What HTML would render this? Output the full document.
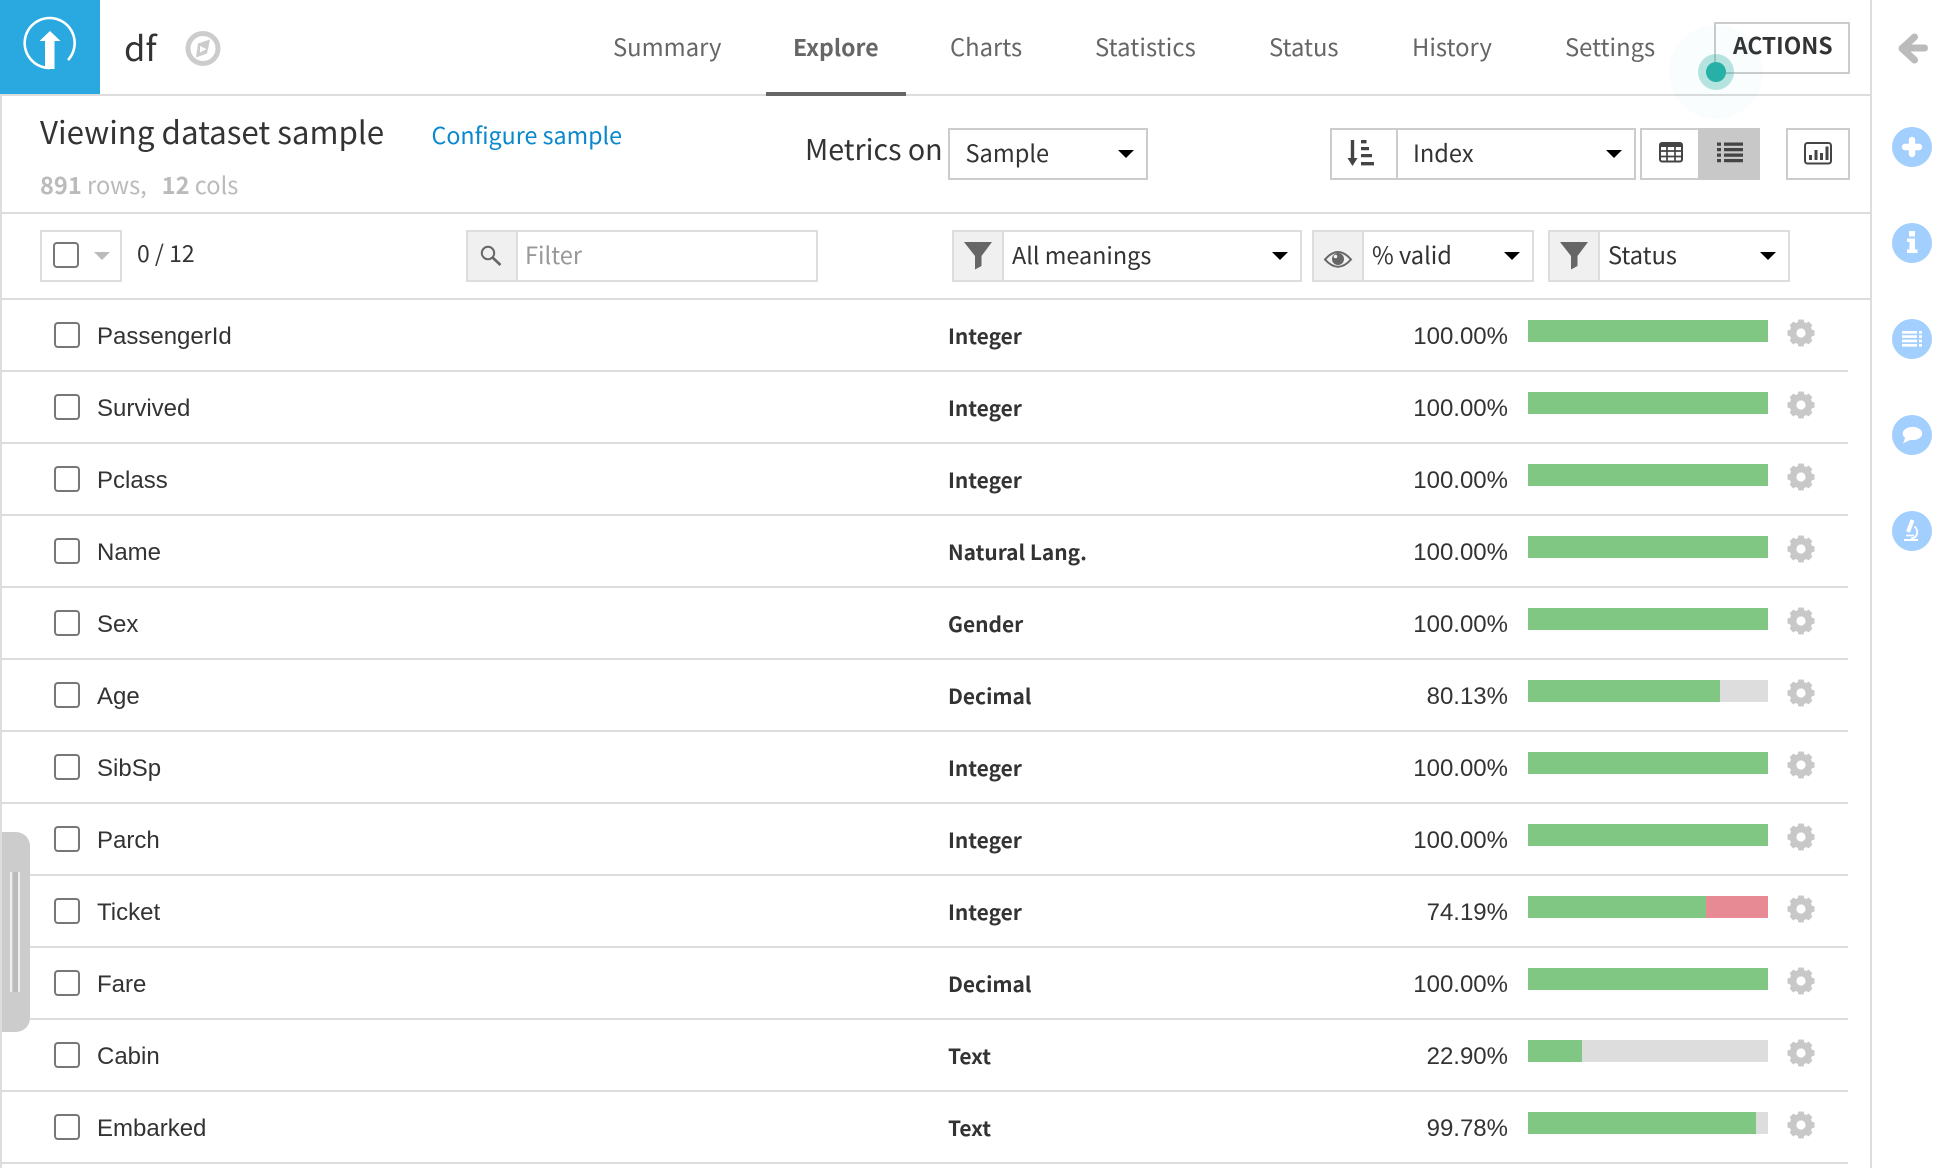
<!DOCTYPE html>
<html lang="en">
<head>
<meta charset="utf-8">
<title>df - Explore</title>
<style>
html,body{margin:0;padding:0;background:#fff}
body{position:relative;width:1944px;height:1168px;overflow:hidden;color:#333;font-family:"Noto Sans CJK JP","Liberation Sans",sans-serif;font-size:23.6px}
a{color:inherit;text-decoration:none}
.t{position:absolute;white-space:nowrap;line-height:40px}
.b{position:absolute;box-sizing:border-box;border:2px solid #ccc;background:#fff}
.l{border-color:#ddd}
.s{position:absolute;top:0;bottom:0;background:#f0f0f0;border-right:2px solid #ddd}
.c{position:absolute;width:0;height:0;border-left:8px solid transparent;border-right:8px solid transparent;border-top:8px solid #000}
.nav{top:26px;color:#666;font-size:23.8px}
.row{position:absolute;left:2px;width:1846px;height:70px;border-bottom:2px solid #ddd}
.row .cb{position:absolute;left:52px;top:22px;width:26px;height:26px;box-sizing:border-box;border:2px solid #777;border-radius:4px}
.row .n,.row .p{position:absolute;top:17px;line-height:40px;font-family:"Liberation Sans",sans-serif;font-size:24px;white-space:nowrap}
.row .n{left:95px}
.row .p{right:340px}
.row .m{position:absolute;left:946px;top:16px;line-height:40px;font-size:20.9px;font-weight:700;white-space:nowrap}
.bar{position:absolute;left:1526px;top:20px;width:240px;height:22px;background:#ddd;overflow:hidden}
.bar i{position:absolute;left:0;top:0;bottom:0;background:#81c784}
.bar u{position:absolute;right:0;top:0;bottom:0;background:#e78a93}
.row svg{position:absolute;left:1785px;top:19px;width:28px;height:28px}
svg.a{position:absolute;left:0;top:0;pointer-events:none}
</style>
</head>
<body>
<svg width="0" height="0" style="position:absolute">
<symbol id="g" viewBox="0 0 28 28">
<circle cx="14" cy="14" r="8" fill="none" stroke="#c8c8c8" stroke-width="6.800"/>
<g fill="#c8c8c8">
<rect x="11" y="0.5" width="6" height="7" rx="1.2"/>
<rect x="11" y="0.5" width="6" height="7" rx="1.2" transform="rotate(45 14 14)"/>
<rect x="11" y="0.5" width="6" height="7" rx="1.2" transform="rotate(90 14 14)"/>
<rect x="11" y="0.5" width="6" height="7" rx="1.2" transform="rotate(135 14 14)"/>
<rect x="11" y="0.5" width="6" height="7" rx="1.2" transform="rotate(180 14 14)"/>
<rect x="11" y="0.5" width="6" height="7" rx="1.2" transform="rotate(225 14 14)"/>
<rect x="11" y="0.5" width="6" height="7" rx="1.2" transform="rotate(270 14 14)"/>
<rect x="11" y="0.5" width="6" height="7" rx="1.2" transform="rotate(315 14 14)"/>
</g>
</symbol>
</svg>

<!-- frame lines -->
<div style="position:absolute;left:0;top:94px;width:1872px;height:2px;background:#ddd"></div>
<div style="position:absolute;left:0;top:96px;width:2px;height:1072px;background:#ddd"></div>
<div style="position:absolute;left:1870px;top:0;width:2px;height:1168px;background:#ddd"></div>
<div style="position:absolute;left:2px;top:212px;width:1868px;height:2px;background:#ddd"></div>
<div style="position:absolute;left:2px;top:298px;width:1868px;height:2px;background:#ddd"></div>

<!-- logo -->
<div style="position:absolute;left:0;top:0;width:100px;height:94px;background:#29a9df"></div>
<div class="t" style="left:124px;top:26px;font-size:34.5px">df</div>

<!-- nav -->
<a class="t nav" style="left:613px">Summary</a>
<a class="t nav" style="left:793px;font-weight:700;font-size:23px">Explore</a>
<a class="t nav" style="left:950px">Charts</a>
<a class="t nav" style="left:1095px;letter-spacing:.1px">Statistics</a>
<a class="t nav" style="left:1269px">Status</a>
<a class="t nav" style="left:1412px">History</a>
<a class="t nav" style="left:1565px">Settings</a>
<div style="position:absolute;left:766px;top:92px;width:140px;height:4px;background:#666"></div>
<div class="b" style="left:1714px;top:22px;width:136px;height:52px"></div>
<div class="t" style="left:1733px;top:25px;font-size:22.8px;font-weight:700">ACTIONS</div>

<!-- title row -->
<div class="t" style="left:40px;top:112px;font-size:31.3px">Viewing dataset sample</div>
<a class="t" style="left:431.500px;top:114px;color:#0a88cc;font-size:23.25px">Configure sample</a>
<div class="t" style="left:40px;top:164px;color:#bbb"><b>891</b> rows,<span style="display:inline-block;width:15px"></span><b>12</b> cols</div>
<div class="t" style="left:805px;top:129px;font-size:28.6px">Metrics on</div>

<div class="b" style="left:948px;top:128px;width:200px;height:52px"></div>
<div class="t" style="left:965.500px;top:132px">Sample</div>
<div class="c" style="left:1118px;top:150px"></div>

<div class="b" style="left:1330px;top:128px;width:306px;height:52px"><div style="position:absolute;left:64px;top:0;bottom:0;width:2px;background:#ccc"></div></div>
<div class="t" style="left:1413px;top:132px">Index</div>
<div class="c" style="left:1606px;top:150px"></div>

<div class="b" style="left:1640px;top:128px;width:120px;height:52px"><div style="position:absolute;left:56px;right:-2px;top:-2px;bottom:-2px;background:#c8c8c8"></div></div>
<div class="b" style="left:1786px;top:128px;width:64px;height:52px"></div>

<!-- toolbar -->
<div class="b l" style="left:40px;top:230px;width:82px;height:52px"></div>
<div style="position:absolute;left:52.500px;top:242px;width:26px;height:26px;box-sizing:border-box;border:2px solid #777;border-radius:4px"></div>
<div class="c" style="left:94px;top:252px;border-top-color:#bbb"></div>
<div class="t" style="left:137px;top:232px;font-size:23px">0 / 12</div>

<div class="b l" style="left:466px;top:230px;width:352px;height:52px"><div class="s" style="left:0;width:48px"></div></div>
<div class="t" style="left:525px;top:234px;color:#999">Filter</div>

<div class="b l" style="left:952px;top:230px;width:350px;height:52px"><div class="s" style="left:0;width:48px"></div></div>
<div class="t" style="left:1012px;top:234px;font-size:23.400px">All meanings</div>
<div class="c" style="left:1272px;top:252px"></div>

<div class="b l" style="left:1312px;top:230px;width:222px;height:52px"><div class="s" style="left:0;width:48px"></div></div>
<div class="t" style="left:1372px;top:234px">% valid</div>
<div class="c" style="left:1504px;top:252px"></div>

<div class="b l" style="left:1548px;top:230px;width:242px;height:52px"><div class="s" style="left:0;width:48px"></div></div>
<div class="t" style="left:1608px;top:234px">Status</div>
<div class="c" style="left:1760px;top:252px"></div>

<!-- rows -->
<div class="row" style="top:300px"><span class="cb"></span><span class="n">PassengerId</span><span class="m">Integer</span><span class="p">100.00%</span><div class="bar"><i style="width:100%"></i></div><svg><use href="#g"/></svg></div>
<div class="row" style="top:372px"><span class="cb"></span><span class="n">Survived</span><span class="m">Integer</span><span class="p">100.00%</span><div class="bar"><i style="width:100%"></i></div><svg><use href="#g"/></svg></div>
<div class="row" style="top:444px"><span class="cb"></span><span class="n">Pclass</span><span class="m">Integer</span><span class="p">100.00%</span><div class="bar"><i style="width:100%"></i></div><svg><use href="#g"/></svg></div>
<div class="row" style="top:516px"><span class="cb"></span><span class="n">Name</span><span class="m">Natural Lang.</span><span class="p">100.00%</span><div class="bar"><i style="width:100%"></i></div><svg><use href="#g"/></svg></div>
<div class="row" style="top:588px"><span class="cb"></span><span class="n">Sex</span><span class="m">Gender</span><span class="p">100.00%</span><div class="bar"><i style="width:100%"></i></div><svg><use href="#g"/></svg></div>
<div class="row" style="top:660px"><span class="cb"></span><span class="n">Age</span><span class="m">Decimal</span><span class="p">80.13%</span><div class="bar"><i style="width:192px"></i></div><svg><use href="#g"/></svg></div>
<div class="row" style="top:732px"><span class="cb"></span><span class="n">SibSp</span><span class="m">Integer</span><span class="p">100.00%</span><div class="bar"><i style="width:100%"></i></div><svg><use href="#g"/></svg></div>
<div class="row" style="top:804px"><span class="cb"></span><span class="n">Parch</span><span class="m">Integer</span><span class="p">100.00%</span><div class="bar"><i style="width:100%"></i></div><svg><use href="#g"/></svg></div>
<div class="row" style="top:876px"><span class="cb"></span><span class="n">Ticket</span><span class="m">Integer</span><span class="p">74.19%</span><div class="bar"><i style="width:178px"></i><u style="width:62px"></u></div><svg><use href="#g"/></svg></div>
<div class="row" style="top:948px"><span class="cb"></span><span class="n">Fare</span><span class="m">Decimal</span><span class="p">100.00%</span><div class="bar"><i style="width:100%"></i></div><svg><use href="#g"/></svg></div>
<div class="row" style="top:1020px"><span class="cb"></span><span class="n">Cabin</span><span class="m">Text</span><span class="p">22.90%</span><div class="bar"><i style="width:54px"></i></div><svg><use href="#g"/></svg></div>
<div class="row" style="top:1092px"><span class="cb"></span><span class="n">Embarked</span><span class="m">Text</span><span class="p">99.78%</span><div class="bar"><i style="width:228px"></i></div><svg><use href="#g"/></svg></div>

<!-- left handle -->
<div style="position:absolute;left:2px;top:832px;width:28px;height:200px;background:#ccc;border-radius:0 14px 14px 0"></div>
<div style="position:absolute;left:10px;top:872px;width:2px;height:120px;background:#eee"></div>
<div style="position:absolute;left:13px;top:872px;width:5px;height:120px;background:#bbb"></div>
<div style="position:absolute;left:18px;top:872px;width:2px;height:120px;background:#eee"></div>

<!-- icons -->
<svg class="a" width="1944" height="1168" viewBox="0 0 1944 1168">
<!-- logo -->
<path d="M50 68A25 25 0 1 1 68 60" fill="none" stroke="#fff" stroke-width="2.6"/>
<path d="M50 31L60.5 41H54.5V69H45V41H39.5Z" fill="#fff"/>
<!-- compass -->
<circle cx="203" cy="48.500" r="15" fill="none" stroke="#ccc" stroke-width="5"/>
<path d="M210 39.500L207 53.500L196 57.500L198 43.500Z" fill="#ccc"/>
<path d="M200 46L206.500 49L200 52.500Z" fill="#fff"/>
<!-- sort -->
<path d="M1352.500 140V163" stroke="#444" stroke-width="3.400" fill="none"/>
<path d="M1347.500 158L1352.500 166L1357.500 158Z" fill="#444"/>
<path d="M1361 140h5.500v3.400h-5.500zM1361 147h8v3.200h-8zM1361 154h11v3.200h-11zM1361 162h13v3.400h-13z" fill="#444"/>
<!-- grid -->
<rect x="1660" y="143" width="22" height="18.500" rx="2" fill="#fff" stroke="#444" stroke-width="2"/>
<path d="M1660 144h22v3h-22z" fill="#444"/>
<path d="M1667 146v15M1675 146v15M1660 151h22M1660 156.500h22" stroke="#444" stroke-width="1.700" fill="none"/>
<!-- list -->
<path d="M1717 142.500h4v3.200h-4zM1724 142.500h19v3.200h-19zM1717 148h4v3.200h-4zM1724 148h19v3.200h-19zM1717 153.500h4v3.200h-4zM1724 153.500h19v3.200h-19zM1717 159h4v3.200h-4zM1724 159h19v3.200h-19z" fill="#444"/>
<!-- chart -->
<rect x="1805" y="143" width="26" height="20.500" rx="2.500" fill="none" stroke="#444" stroke-width="2"/>
<path d="M1809 155h3v5h-3zM1814.500 150h3v10h-3zM1820 153h3v7h-3zM1825.500 146.500h3v13.500h-3z" fill="#444"/>
<!-- search -->
<circle cx="488" cy="253" r="6.200" fill="none" stroke="#666" stroke-width="2"/>
<path d="M492.500 257.500L500.500 265" stroke="#666" stroke-width="2.600" fill="none"/>
<!-- funnels -->
<path d="M964 242H992L981.500 256V266L975 269.500V256Z" fill="#666"/>
<path d="M1560 242H1588L1577.500 256V266L1571 269.500V256Z" fill="#666"/>
<!-- eye -->
<path d="M1325 259.500Q1338 244.500 1351 259.500Q1338 274 1325 259.500Z" fill="#f0f0f0" stroke="#666" stroke-width="2"/>
<circle cx="1338" cy="259" r="6" fill="#666"/>
<circle cx="1335.500" cy="256.500" r="1.800" fill="#f0f0f0"/>
<!-- pulse -->
<circle cx="1716" cy="72" r="47" fill="#26b0a6" fill-opacity=".025"/>
<circle cx="1716" cy="72" r="18" fill="#26b0a6" fill-opacity=".32"/>
<circle cx="1716" cy="72" r="10" fill="#26b0a6"/>
<!-- back -->
<path d="M1924.500 48H1904M1914.500 37L1902 48.500L1914.500 60" fill="none" stroke="#bbb" stroke-width="7" stroke-linecap="round" stroke-linejoin="round"/>
<!-- side circles -->
<g fill="#a2cffe">
<circle cx="1912" cy="147" r="20"/><circle cx="1912" cy="243" r="20"/><circle cx="1912" cy="339" r="20"/><circle cx="1912" cy="435" r="20"/><circle cx="1912" cy="531" r="20"/>
</g>
<path d="M1905 147h14M1912 140v14" stroke="#fff" stroke-width="6.400" stroke-linecap="round" fill="none"/>
<path d="M1909 231h6v5.500h-6zM1907 238.500h8v11h2.500v3.500h-10.500v-3.500h2.500v-7.500h-2.500z" fill="#fff"/>
<path d="M1902 331h15v2.600h-15zM1919 331h3v2.600h-3zM1902 335.300h15v2.600h-15zM1919 335.300h3v2.600h-3zM1902 339.600h15v2.600h-15zM1919 339.600h3v2.600h-3zM1902 344h15v2.600h-15zM1919 344h3v2.600h-3z" fill="#fff"/>
<ellipse cx="1912.500" cy="433.500" rx="9.800" ry="6.600" fill="#fff"/>
<path d="M1905.500 437L1903 443.500L1911 439.500Z" fill="#fff"/>
<path d="M1904 540h14" stroke="#fff" stroke-width="2" fill="none"/>
<path d="M1914.500 526.500C1919 530 1918 538 1911 538.500" stroke="#fff" stroke-width="1.800" fill="none"/>
<path d="M1912.500 520L1908 532" stroke="#fff" stroke-width="4" fill="none"/>
<path d="M1906 535.500h8" stroke="#fff" stroke-width="1.600" fill="none"/>
</svg>
</body>
</html>
